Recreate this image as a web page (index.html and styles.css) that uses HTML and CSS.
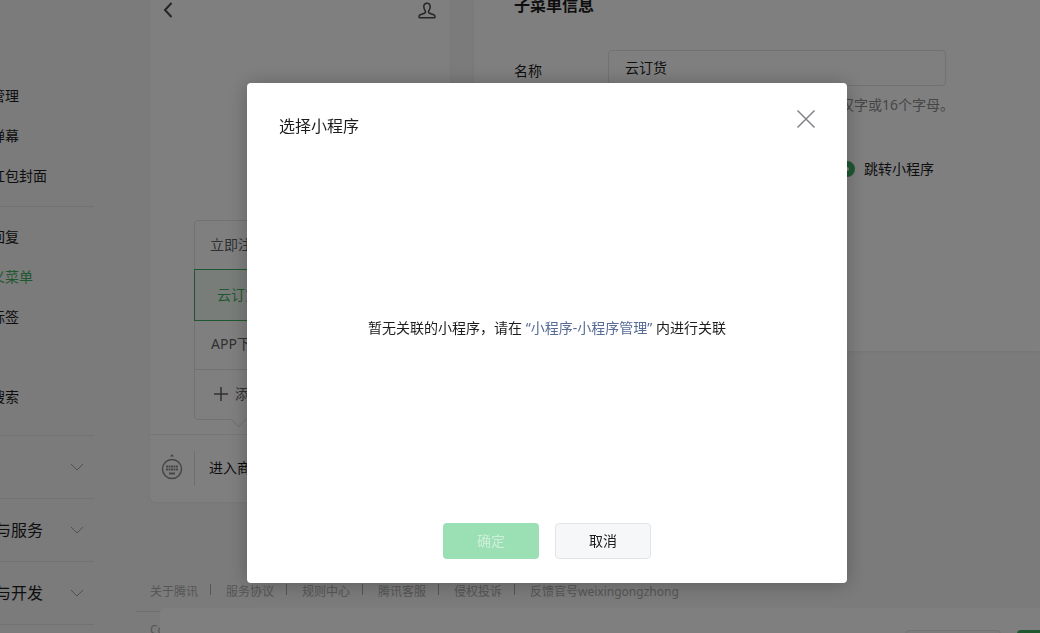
FILE: index.html
```html
<!DOCTYPE html>
<html lang="zh-CN">
<head>
<meta charset="utf-8">
<meta name="viewport" content="width=device-width, initial-scale=1">
<title>自定义菜单</title>
<link rel="stylesheet" href="styles.css">
</head>
<body>
<div class="page">
  <nav class="sidebar">
    <div class="nav-group nav-first">
      <a class="nav-link" href="#">管理</a>
      <a class="nav-link" href="#">弹幕</a>
      <a class="nav-link" href="#">红包封面</a>
    </div>
    <div class="nav-group nav-second">
      <a class="nav-link" href="#">回复</a>
      <a class="nav-link active" href="#">义菜单</a>
      <a class="nav-link" href="#">标签</a>
      <span class="nav-link"></span>
      <a class="nav-link" href="#">搜索</a>
    </div>
    <button class="nav-section" type="button" aria-label="展开"><span></span>
      <svg class="chevron" viewBox="0 0 14 8"><path d="M1 1l6 6 6-6"/></svg></button>
    <button class="nav-section" type="button"><span>与服务</span>
      <svg class="chevron" viewBox="0 0 14 8"><path d="M1 1l6 6 6-6"/></svg></button>
    <button class="nav-section" type="button"><span>与开发</span>
      <svg class="chevron" viewBox="0 0 14 8"><path d="M1 1l6 6 6-6"/></svg></button>
  </nav>

  <main class="main">
    <div class="panels">
      <section class="phone">
        <header class="phone-head">
          <svg class="icon-back" viewBox="0 0 10 16"><path d="M8.500 1L2 8l6.500 7"/></svg>
          <svg class="icon-user" viewBox="0 0 18 18"><path d="M9 1.200c-2.200 0-3.300 1.400-3.200 3.600.1 1.800.8 3.200 1.500 4.300.5.900.2 1.700-.8 2.100l-4.200 1.600c-.9.400-1.300.9-1.300 1.900 0 .8.300 1.100.9 1.100h14.200c.6 0 .9-.3.900-1.100 0-1-.4-1.500-1.300-1.900l-4.200-1.600c-1-.4-1.300-1.200-.8-2.100.7-1.100 1.400-2.500 1.500-4.300C12.300 2.600 11.200 1.200 9 1.200z"/></svg>
        </header>
        <div class="phone-body">
          <ul class="submenu">
            <li class="submenu-item">立即注册</li>
            <li class="submenu-item selected">云订货</li>
            <li class="submenu-item">APP下载</li>
            <li class="submenu-item add"><svg class="icon-plus" viewBox="0 0 16 16"><path d="M8 1v14M1 8h14"/></svg>添加</li>
          </ul>
        </div>
        <footer class="phone-bar">
          <div class="keyboard">
            <svg class="icon-keyboard" viewBox="0 0 22 34">
              <path class="fill" d="M9 4.500l2-2.500 2 2.500z"/>
              <circle cx="11" cy="17" r="9.500"/>
              <path class="keys" d="M5 14.500h12M5 17.500h12"/>
              <path class="space" d="M8 21.500h6"/>
            </svg>
          </div>
          <div class="phone-menu">进入商城</div>
        </footer>
      </section>

      <form class="editor">
        <h2 class="editor-title">子菜单信息</h2>
        <div class="field">
          <label class="field-label" for="name">名称</label>
          <div class="field-body">
            <input class="text-input" id="name" type="text" value="云订货">
            <p class="hint">仅支持中英文和数字，字数不超过8个汉字或16个字母。</p>
          </div>
        </div>
        <div class="radios">
          <label class="radio"><input type="radio" name="kind">发送消息</label>
          <label class="radio"><input type="radio" name="kind">跳转网页</label>
          <label class="radio"><input type="radio" name="kind" checked>跳转小程序</label>
        </div>
      </form>
    </div>

    <footer class="footer">
      <div class="links">
        <a href="#">关于腾讯</a><a href="#">服务协议</a><a href="#">规则中心</a><a href="#">腾讯客服</a><a href="#">侵权投诉</a><a href="#">反馈官号weixingongzhong</a>
      </div>
      <p class="copyright">Copyright</p>
    </footer>
  </main>
</div>

<div class="save-bar">
  <div class="save-actions">
    <button class="btn btn-default" type="button">预览</button>
    <button class="btn btn-save" type="button">保存</button>
  </div>
</div>

<div class="overlay">
  <div class="dialog" role="dialog" aria-modal="true" aria-labelledby="dialog-title">
    <header class="dialog-head">
      <h3 class="dialog-title" id="dialog-title">选择小程序</h3>
      <button class="close" type="button" aria-label="关闭">
        <svg class="icon-close" viewBox="0 0 20 20"><path d="M1.500 1.500l17 17M18.500 1.500l-17 17"/></svg>
      </button>
    </header>
    <p class="dialog-body">暂无关联的小程序，请在&nbsp;<a class="dialog-link" href="#">“小程序-小程序管理”</a>&nbsp;内进行关联</p>
    <footer class="dialog-foot">
      <button class="btn btn-primary" type="button" disabled>确定</button>
      <button class="btn btn-default" type="button">取消</button>
    </footer>
  </div>
</div>
</body>
</html>
```

FILE: styles.css
```css
* { box-sizing: border-box; }

body {
  margin: 0;
  height: 100vh;
  overflow: hidden;
  background: #f6f6f6;
  color: #1c1c1e;
  font: 14px/20px "Noto Sans", "Noto Sans CJK SC", sans-serif;
}

h2, h3, p, ul { margin: 0; padding: 0; font-weight: 400; }
a { color: inherit; text-decoration: none; }
button, input { font: inherit; color: inherit; }
svg { display: block; fill: none; stroke: currentColor; }

.page { display: flex; height: 100vh; overflow: hidden; }

/* Sidebar */
.sidebar { flex: none; width: 103px; margin: 0 42px 0 -9px; }
.nav-group { display: flex; flex-direction: column; border-bottom: 1px solid #e4e4e6; }
.nav-first { padding: 76px 0 10px; }
.nav-second { padding: 10px 0 18px; }
.nav-link { height: 40px; line-height: 40px; white-space: nowrap; }
.nav-link.active { color: #3faf61; }
.nav-section {
  display: flex;
  align-items: center;
  justify-content: space-between;
  width: 100%;
  height: 63px;
  padding: 0 10px 0 4px;
  border: 0;
  border-bottom: 1px solid #e4e4e6;
  background: none;
  font-size: 16px;
}
.chevron { width: 14px; height: 8px; color: #a0a0a0; }

/* Main column */
.main { flex: 1; min-width: 0; }
.panels { display: flex; align-items: flex-start; gap: 24px; padding-left: 14px; }

.phone {
  flex: none;
  width: 300px;
  background: #fff;
  border-radius: 0 0 6px 6px;
  box-shadow: 0 1px 3px rgba(0, 0, 0, .04);
}
.phone-head { display: flex; justify-content: space-between; height: 20px; padding: 2px 14px 0 13px; color: #4a4a4a; }
.icon-back { width: 10px; height: 16px; stroke-width: 2; }
.icon-user { width: 18px; height: 18px; stroke-width: 1.500; }
.phone-body {
  display: flex;
  align-items: flex-end;
  min-height: 414px;
  padding: 0 0 14px 44px;
}
.submenu {
  position: relative;
  width: 88px;
  border: 1px solid #e4e4e6;
  border-radius: 4px;
  color: #616161;
  list-style: none;
}
.submenu::after {
  content: "";
  position: absolute;
  left: 38px;
  bottom: -6px;
  width: 10px;
  height: 10px;
  border: solid #e4e4e6;
  border-width: 0 1px 1px 0;
  background: #fff;
  transform: rotate(45deg);
}
.submenu-item {
  display: flex;
  align-items: center;
  justify-content: center;
  height: 49px;
  padding-bottom: 1px;
  white-space: nowrap;
}
.submenu-item.selected {
  height: 52px;
  margin: -1px;
  border: 1px solid #3faf61;
  background: #f3fbf5;
  color: #3faf61;
}
.submenu-item.add { gap: 6px; height: 50px; border-top: 1px solid #e4e4e6; }
.icon-plus { width: 16px; height: 16px; stroke-width: 1.500; }
.phone-bar { display: flex; align-items: center; height: 68px; border-top: 1px solid #ececec; }
.keyboard { display: flex; justify-content: center; width: 44px; }
.icon-keyboard { width: 22px; height: 34px; color: #8c8c8c; stroke-width: 1.500; }
.icon-keyboard .fill { fill: currentColor; stroke: none; }
.icon-keyboard .keys { stroke-width: 2; stroke-dasharray: 2 .500; }
.icon-keyboard .space { stroke-width: 2; }
.phone-menu { height: 35px; padding-left: 14px; border-left: 1px solid #dcdcdc; line-height: 34px; }

.editor {
  flex: 1;
  min-width: 0;
  min-height: 351px;
  padding-left: 40px;
  background: #fff;
  box-shadow: 0 1px 3px rgba(0, 0, 0, .04);
}
.editor-title { height: 16px; margin-bottom: 34px; font-size: 16px; font-weight: 700; line-height: 10px; }
.field { display: flex; }
.field-label { width: 94px; padding-top: 11px; }
.field-body { width: 338px; white-space: nowrap; }
.text-input {
  display: block;
  width: 100%;
  height: 36px;
  padding: 0 16px 2px;
  border: 1px solid #e4e4e6;
  border-radius: 4px;
  background: #fff;
  outline: 0;
}
.hint { margin-top: 9px; color: #8c8c8c; }
.radios { display: flex; gap: 34px; padding: 44px 0 0 95px; }
.radio { display: flex; align-items: center; gap: 9px; white-space: nowrap; }
.radio input {
  appearance: none;
  width: 16px;
  height: 16px;
  margin: 0;
  border: 1px solid #dcdcdc;
  border-radius: 50%;
}
.radio input:checked { border: 6px solid #3faf61; background: #fff; }

/* Page footer */
.footer { margin-top: 80px; color: #acacac; font-size: 12px; }
.links { display: flex; padding: 0 0 9px 14px; white-space: nowrap; }
.links a { display: flex; }
.links a + a::before { content: ""; width: 1px; height: 11px; margin: 2px 15px 0 12px; background: #acacac; }
.copyright { padding: 8px 14px 0; border-top: 1px solid #e0e0e0; }

.save-bar {
  position: fixed;
  right: 0;
  bottom: 0;
  left: 160px;
  height: 25px;
  overflow: hidden;
  border-radius: 6px 0 0 0;
  background: #fff;
}
.save-actions { display: flex; justify-content: flex-end; gap: 16px; margin-right: -73px; padding-top: 22px; }

.btn {
  width: 96px;
  height: 36px;
  padding: 0;
  border: 0;
  border-radius: 4px;
}
.btn-default { border: 1px solid #e2e4e6; background: #f6f7f9; }
.btn-save { background: #3faf61; color: #fff; }
.btn-primary { background: #9bdfb4; color: #cdefd9; }

/* Dialog */
.overlay {
  position: fixed;
  inset: 0;
  display: flex;
  align-items: center;
  justify-content: center;
  padding: 33px 0 0 54px;
  background: rgba(0, 0, 0, .5);
}
.dialog {
  display: flex;
  flex-direction: column;
  width: 600px;
  min-height: 500px;
  padding: 24px 32px;
  border-radius: 4px;
  background: #fff;
  box-shadow: 0 1px 20px rgba(0, 0, 0, .25);
}
.dialog-head { display: flex; justify-content: space-between; margin-right: -2px; }
.dialog-title { padding-top: 9px; font-size: 16px; }
.close { align-self: flex-start; padding: 2px 1px; border: 0; background: none; color: #808285; }
.icon-close { width: 20px; height: 20px; stroke-width: 1.500; }
.dialog-body { margin: auto; padding-bottom: 4px; white-space: nowrap; }
.dialog-link { color: #576b95; }
.dialog-foot { display: flex; justify-content: center; gap: 16px; }
```
